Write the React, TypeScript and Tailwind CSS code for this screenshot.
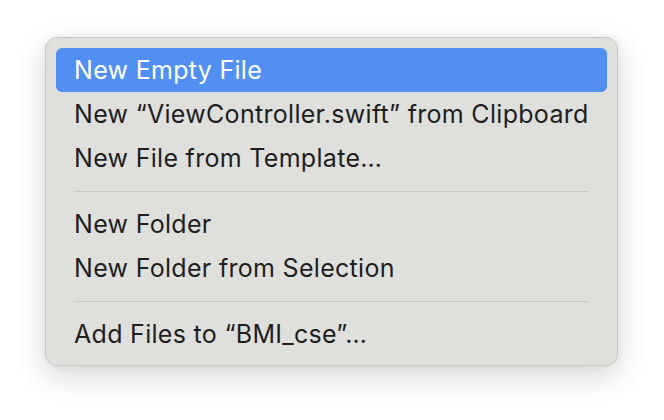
const items: (string | null)[] = [
  'New Empty File',
  'New \u201CViewController.swift\u201D from Clipboard',
  'New File from Template\u2026',
  null,
  'New Folder',
  'New Folder from Selection',
  null,
  'Add Files to \u201CBMI_cse\u201D\u2026',
];

const App = () => {
  return (
    <div className="w-[664px] h-[420px] bg-white overflow-hidden pt-[37px] pl-[45px]">
      <div
        className="w-[573px] rounded-[12px] border border-[#c9c9c6] bg-[#dfe0dc] px-[10px] pt-[10px] pb-[9px] shadow-[0_10px_30px_rgba(0,0,0,0.16),0_0_6px_rgba(0,0,0,0.06)]"
        style={{ fontFamily: 'Inter, "Noto Sans", sans-serif' }}
      >
        {items.map((label, i) =>
          label === null ? (
            <div key={i} className="h-[22px] flex items-center px-[18px]">
              <div className="h-px w-full bg-[#c8c9c5]" />
            </div>
          ) : (
            <div
              key={i}
              className={`h-[44px] flex items-center pl-[18px] pr-[4px] rounded-[6px] text-[25px] tracking-[0.3px] pt-[2px] whitespace-nowrap ${
                i === 0 ? 'bg-[#528ff2] text-white' : 'text-[#1e1e1e]'
              }`}
            >
              {label}
            </div>
          )
        )}
      </div>
    </div>
  );
};

export default App;
